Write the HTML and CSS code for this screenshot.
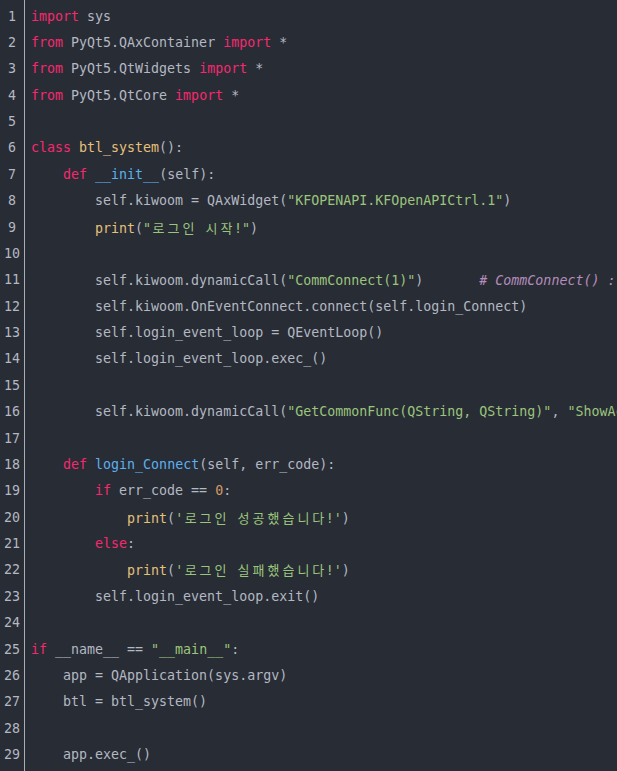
FILE: index.html
```html
<!DOCTYPE html>
<html lang="ko">
<head>
<meta charset="utf-8">
<title>btl_system.py</title>
<link rel="stylesheet" href="styles.css">
</head>
<body>
<div class="editor">
  <div class="gutter">
    <div class="ln">1</div><div class="ln">2</div><div class="ln">3</div><div class="ln">4</div><div class="ln">5</div>
    <div class="ln">6</div><div class="ln">7</div><div class="ln">8</div><div class="ln">9</div><div class="ln">10</div>
    <div class="ln">11</div><div class="ln">12</div><div class="ln">13</div><div class="ln">14</div><div class="ln">15</div>
    <div class="ln">16</div><div class="ln">17</div><div class="ln">18</div><div class="ln">19</div><div class="ln">20</div>
    <div class="ln">21</div><div class="ln">22</div><div class="ln">23</div><div class="ln">24</div><div class="ln">25</div>
    <div class="ln">26</div><div class="ln">27</div><div class="ln">28</div><div class="ln">29</div>
  </div>
  <div class="code">
<div class="line"><span class="kw">import</span> sys</div>
<div class="line"><span class="kw">from</span> PyQt5.QAxContainer <span class="kw">import</span> *</div>
<div class="line"><span class="kw">from</span> PyQt5.QtWidgets <span class="kw">import</span> *</div>
<div class="line"><span class="kw">from</span> PyQt5.QtCore <span class="kw">import</span> *</div>
<div class="line"> </div>
<div class="line"><span class="kw">class</span> <span class="cl">btl_system</span>():</div>
<div class="line">    <span class="kw">def</span> <span class="fn">__init__</span>(self):</div>
<div class="line">        self.kiwoom = QAxWidget(<span class="s">"KFOPENAPI.KFOpenAPICtrl.1"</span>)</div>
<div class="line">        <span class="cl">print</span>(<span class="s">"<span class="ko">로그인</span> <span class="ko">시작</span>!"</span>)</div>
<div class="line"> </div>
<div class="line">        self.kiwoom.dynamicCall(<span class="s">"CommConnect(1)"</span>)       <span class="cm"># CommConnect() : <span class="ko">로그인</span> <span class="ko">창</span> <span class="ko">출력</span></span></div>
<div class="line">        self.kiwoom.OnEventConnect.connect(self.login_Connect)</div>
<div class="line">        self.login_event_loop = QEventLoop()</div>
<div class="line">        self.login_event_loop.exec_()</div>
<div class="line"> </div>
<div class="line">        self.kiwoom.dynamicCall(<span class="s">"GetCommonFunc(QString, QString)"</span>, <span class="s">"ShowAccountWindow"</span>, <span class="s">""</span>)</div>
<div class="line"> </div>
<div class="line">    <span class="kw">def</span> <span class="fn">login_Connect</span>(self, err_code):</div>
<div class="line">        <span class="kw">if</span> err_code == <span class="num">0</span>:</div>
<div class="line">            <span class="cl">print</span>(<span class="s">'<span class="ko">로그인</span> <span class="ko">성공했습니다</span>!'</span>)</div>
<div class="line">        <span class="kw">else</span>:</div>
<div class="line">            <span class="cl">print</span>(<span class="s">'<span class="ko">로그인</span> <span class="ko">실패했습니다</span>!'</span>)</div>
<div class="line">        self.login_event_loop.exit()</div>
<div class="line"> </div>
<div class="line"><span class="kw">if</span> __name__ == <span class="s">"__main__"</span>:</div>
<div class="line">    app = QApplication(sys.argv)</div>
<div class="line">    btl = btl_system()</div>
<div class="line"> </div>
<div class="line">    app.exec_()</div>
  </div>
</div>
</body>
</html>
```
FILE: styles.css
```css
html, body {
  margin: 0;
  padding: 0;
  background: #282c35;
  overflow: hidden;
}
.editor {
  display: flex;
  min-height: 100vh;
  background: #282c35;
  font-family: "DejaVu Sans Mono", "Noto Sans CJK KR", monospace;
  font-size: 13.3px;
  color: #b3b8c2;
}
.gutter {
  flex: 0 0 24px;
  width: 24px;
  border-right: 1px solid #a9adb5;
  padding-top: 3.5px;
  box-sizing: content-box;
}
.ln {
  height: 26.38px;
  line-height: 26.38px;
  text-align: center;
  color: #b3b8c2;
}
.code {
  flex: 1;
  padding-top: 3.5px;
  padding-left: 6px;
  overflow: hidden;
  min-width: 0;
}
.line {
  height: 26.38px;
  line-height: 26.38px;
  white-space: pre;
}
.kw { color: #f5296f; }
.s { color: #9bc57c; }
.fn { color: #5cb0ef; }
.cl { color: #e5c07b; }
.num { color: #d39a66; }
.cm { color: #b58cbb; font-style: italic; }
.ko {
  font-family: "Noto Sans CJK KR", sans-serif;
  font-size: 13px;
  letter-spacing: 3px;
  margin-left: 1.5px;
  margin-right: -1.5px;
}
```
